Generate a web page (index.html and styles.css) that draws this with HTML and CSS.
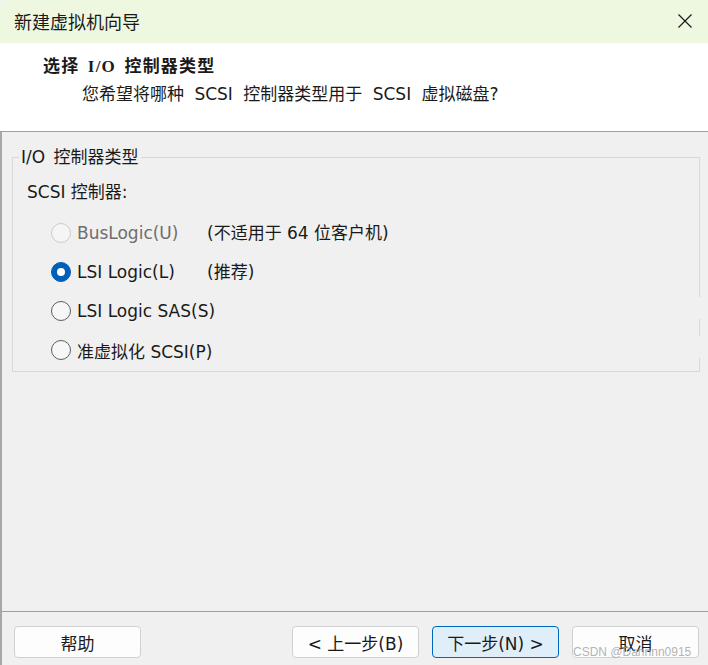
FILE: index.html
```html
<!DOCTYPE html>
<html lang="zh-CN">
<head>
<meta charset="utf-8">
<title>新建虚拟机向导</title>
<link rel="stylesheet" href="styles.css">
</head>
<body>
<div class="window">
  <div class="titlebar">
    <span class="title">新建虚拟机向导</span>
    <svg class="close" width="16" height="16" viewBox="0 0 16 16"><path d="M1.5 1.5 L14.5 14.5 M14.5 1.5 L1.5 14.5" stroke="#1a1a1a" stroke-width="1.2" fill="none"/></svg>
  </div>
  <div class="header">
    <div class="h-title">选择 I/O 控制器类型</div>
    <div class="h-sub">您希望将哪种 SCSI 控制器类型用于 SCSI 虚拟磁盘?</div>
  </div>
  <div class="content">
    <fieldset class="group">
      <legend>I/O 控制器类型</legend>
      <div class="g-label">SCSI 控制器:</div>
      <div class="options">
        <div class="row disabled"><span class="radio"></span><span class="opt">BusLogic(U)</span><span class="note">(不适用于 64 位客户机)</span></div>
        <div class="row"><span class="radio checked"></span><span class="opt">LSI Logic(L)</span><span class="note">(推荐)</span></div>
        <div class="row wide"><span class="radio"></span><span class="opt">LSI Logic SAS(S)</span></div>
        <div class="row wide"><span class="radio"></span><span class="opt">准虚拟化 SCSI(P)</span></div>
      </div>
    </fieldset>
  </div>
  <div class="footer">
    <button class="btn">帮助</button>
    <div class="nav">
      <button class="btn">&lt; 上一步(B)</button>
      <button class="btn primary">下一步(N) &gt;</button>
      <button class="btn">取消</button>
    </div>
  </div>
  <div class="watermark">CSDN @Dannnn0915</div>
</div>
</body>
</html>
```
FILE: styles.css
```css
* { box-sizing: border-box; }
html, body { margin: 0; padding: 0; }
body {
  font-family: "DejaVu Sans", "Noto Sans CJK SC", sans-serif;
  font-size: 17px;
  color: #1a1a1a;
  background: #f0f0f0;
}
.window {
  position: relative;
  width: 708px;
  height: 665px;
  display: flex;
  flex-direction: column;
  background: #f0f0f0;
  overflow: hidden;
}
.titlebar {
  height: 43px;
  flex: none;
  background: #eef7e0;
  display: flex;
  align-items: center;
  justify-content: space-between;
  padding: 0 15px 2px 14px;
  border-top-left-radius: 6px;
}
.title {
  font-family: "Noto Sans CJK SC", sans-serif;
  font-size: 18px;
  color: #1a1a1a;
}
.close { display: block; }
.header {
  height: 89px;
  flex: none;
  background: #ffffff;
  border-bottom: 1px solid #a0a0a0;
  padding-top: 13px;
}
.h-title {
  font-family: "Liberation Serif", "Noto Sans CJK SC", serif;
  font-weight: bold;
  font-size: 17px;
  line-height: 22px;
  padding-left: 43px;
  letter-spacing: 1.2px;
  word-spacing: 3px;
}
.h-sub {
  line-height: 22px;
  margin-top: 5px;
  padding-left: 82px;
  word-spacing: 5px;
}
.content {
  flex: 1;
  border-left: 2px solid #a8a8a8;
  padding: 15px 8px 0 10px;
}
.group {
  margin: 0;
  padding: 0 0 13px 0;
  width: 688px;
  border: 1px solid #d8d8d8;
  min-width: 0;
}
.group legend {
  margin-left: 6px;
  padding: 0 2px;
  line-height: 20px;
  word-spacing: 3px;
}
.g-label {
  margin-top: 15px;
  padding-left: 14px;
  line-height: 20px;
}
.options {
  margin-top: 17px;
  display: flex;
  flex-direction: column;
  gap: 17px;
}
.row {
  height: 22px;
  display: flex;
  align-items: center;
  padding-left: 38px;
  padding-top: 6px;
}
.row.wide {
  margin-right: -2px;
  background: #f0f0f0;
}
.radio {
  width: 20px;
  height: 20px;
  border-radius: 50%;
  border: 1px solid #5d5d5d;
  background: #f7f7f7;
  flex: none;
  position: relative;
}
.row.disabled .radio {
  border-color: #cbcbcb;
  background: #f5f5f5;
}
.radio.checked {
  background: #005fb8;
  border-color: #005fb8;
}
.radio.checked::after {
  content: "";
  position: absolute;
  left: 5px;
  top: 5px;
  width: 8px;
  height: 8px;
  border-radius: 50%;
  background: #ffffff;
}
.opt {
  margin-left: 6px;
  width: 130px;
  white-space: nowrap;
}
.row.disabled .opt { color: #6e6e6e; }
.note { white-space: nowrap; margin-top: -4px; }
.footer {
  height: 54px;
  flex: none;
  border-top: 1px solid #a0a0a0;
  border-left: 2px solid #a8a8a8;
  display: flex;
  justify-content: space-between;
  padding: 14px 9px 0 12px;
}
.nav { display: flex; gap: 13px; }
.btn {
  width: 127px;
  height: 32px;
  font-family: "DejaVu Sans", "Noto Sans CJK SC", sans-serif;
  font-size: 17px;
  color: #1a1a1a;
  background: #fdfdfd;
  border: 1px solid #d0d0d0;
  border-radius: 4px;
  padding: 0;
}
.btn.primary {
  background: #e0eef9;
  border-color: #0067c0;
}
.watermark {
  position: absolute;
  left: 573px;
  top: 645px;
  font-family: "Liberation Sans", sans-serif;
  font-size: 12px;
  color: rgba(160, 160, 160, 0.8);
  white-space: nowrap;
}
```
